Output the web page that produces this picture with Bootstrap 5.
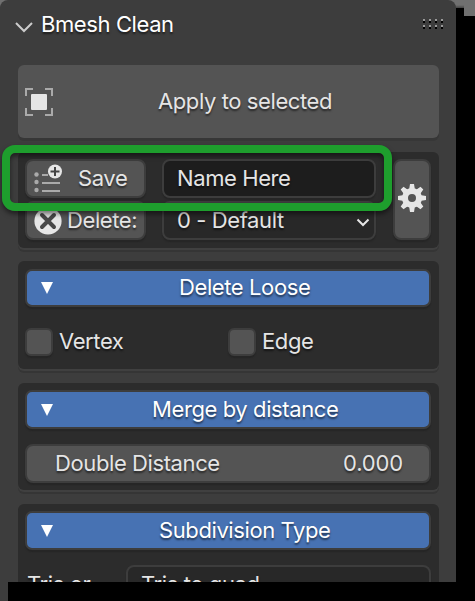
<!DOCTYPE html>
<html lang="en" data-bs-theme="dark">
<head>
<meta charset="utf-8">
<title>Bmesh Clean</title>
<meta name="viewport" content="width=device-width, initial-scale=1">
<link href="https://cdn.jsdelivr.net/npm/bootstrap@5.3.0/dist/css/bootstrap.min.css" rel="stylesheet">
<style>
body{background:#000;font-family:Inter,"Open Sans",sans-serif;font-size:22px;letter-spacing:-.4px;line-height:1;color:#e5e5e5;width:475px;height:601px}
.backdrop{left:0;top:0;width:475px;height:8px;background:linear-gradient(#707070 5px,#444 8px)}
.backdrop-tab{right:0;top:0;width:11px;height:16px;background:#707070}
.panel{width:456px;height:582px;background:#3d3d3d;border-radius:8px 8px 0 0;padding:0 17px 0 18px}
.panel-foot{width:8px;height:19px;background:#3d3d3d}
.panel-head{height:65px;color:#fff;padding-top:13px;margin-left:-3px}
.panel-head,.ctl,.lbl{text-shadow:0 2px 2px rgba(0,0,0,.55);white-space:nowrap}
.ctl>span,.lbl>span,span.lbl{padding-bottom:2px}
.grip{margin:6px -6px 0 0}
.chevron{margin:8px 8px 0 0}
.apply{height:73px;background:#545454;border-radius:6px;box-shadow:0 3px 0 #373737;margin-bottom:14px}
.group{background:#2c2c2c;border-radius:6px;padding:7px 8px 0 7px;margin-bottom:13px;box-shadow:0 2px 0 #404040,0 4px 0 #353535}
.ctl{border:2px solid #3d3d3d;border-radius:8px;height:39px;background:#545454;box-shadow:0 2px 1px #262626}
.ctl.blue{background:#4772b3;color:#fff;border-radius:7px}
.ctl.field{background:#1d1d1d}
.ctl.menu{background:#282828}
.stack{gap:3px}
.left-col{width:121px}
.mid-col{width:214px;margin-left:16px}
.gear{width:38px;height:81px}
.box-check{width:28px;height:28px;border-radius:6px}
.icon{margin-left:7px;flex:none}
.marker{left:2px;top:145px;width:390px;height:66px;border:8px solid #1e9e2d;border-radius:13px;box-shadow:0 3px 5px rgba(0,0,0,.5),inset 0 3px 5px rgba(0,0,0,.5)}
.g1{height:96px}.g2{height:108px;padding-top:8px;margin-bottom:14px}.g3{height:107px;margin-bottom:14px}.g4{height:90px;margin-bottom:0}
.g2 .blue{height:38px}
.g2 .blue span{padding-bottom:3px}
.tri{margin-left:14px}
.num{letter-spacing:-.15px}
</style>
<script src="https://cdn.jsdelivr.net/npm/bootstrap@5.3.0/dist/js/bootstrap.bundle.min.js"></script>
</head>
<body class="position-relative overflow-hidden m-0">
<div class="backdrop position-absolute"></div>
<div class="backdrop-tab position-absolute"></div>
<main class="panel position-relative overflow-hidden">
  <header class="panel-head d-flex align-items-start">
    <svg class="chevron" width="18" height="12" viewBox="0 0 18 12"><path d="M1 2l8 8 8-8" fill="none" stroke="#ccc" stroke-width="2"/></svg>
    <span>Bmesh Clean</span>
    <svg class="grip ms-auto" width="22" height="11" viewBox="0 0 22 11" shape-rendering="crispEdges"><path fill="#999" d="M0 0h2v2H0zM6 0h2v2H6zM12 0h2v2h-2zM18 0h2v2h-2zM0 6h2v2H0zM6 6h2v2H6zM12 6h2v2h-2zM18 6h2v2h-2z"/><path d="M0 2h2v2H0zM6 2h2v2H6zM12 2h2v2h-2zM18 2h2v2h-2zM0 8h2v2H0zM6 8h2v2H6zM12 8h2v2h-2zM18 8h2v2h-2z" fill="#000"/></svg>
  </header>

  <div class="apply lbl d-flex align-items-center">
    <svg class="icon" width="28" height="28" viewBox="0 0 28 28"><path d="M1 8V1h7M20 1h7v7M27 20v7h-7M8 27H1v-7" fill="none" stroke="#aaa" stroke-width="2"/><rect x="6" y="6" width="16" height="16" rx="1" fill="#e6e6e6"/></svg>
    <span style="margin-left:105px">Apply to selected</span>
  </div>

  <section class="group g1 d-flex">
    <div class="left-col stack d-flex flex-column">
      <div class="ctl d-flex align-items-center">
        <svg class="icon" width="28" height="30" viewBox="0 0 28 30"><g fill="#aaa"><circle cx="2.500" cy="10.500" r="2.200"/><circle cx="2.500" cy="18" r="2.200"/><circle cx="2.500" cy="26" r="2.200"/><path d="M8 10h6v2H8zM8 18h18v2H8zM8 26h18v2H8z"/></g><circle cx="21" cy="7.500" r="7" fill="#e6e6e6"/><path d="M21 3v9M16.500 7.500h9" stroke="#444" stroke-width="2"/></svg>
        <span style="margin-left:16px">Save</span>
      </div>
      <div class="ctl d-flex align-items-center">
        <svg class="icon" width="28" height="28" viewBox="0 0 28 28"><circle cx="14" cy="14" r="13.600" fill="#e6e6e6"/><path d="M8 8l12 12M20 8L8 20" stroke="#484848" stroke-width="4" stroke-linecap="round"/></svg>
        <span style="margin-left:5px">Delete:</span>
      </div>
    </div>
    <div class="mid-col stack d-flex flex-column">
      <div class="ctl field d-flex align-items-center"><span style="margin-left:13px">Name Here</span></div>
      <div class="ctl menu d-flex align-items-center"><span style="margin-left:13px">0 - Default</span>
        <svg class="ms-auto me-1 mt-1" width="14" height="10" viewBox="0 0 14 10"><path d="M1.500 1.500L7 7l5.500-5.500" fill="none" stroke="#e6e6e6" stroke-width="2"/></svg>
      </div>
    </div>
    <div class="ctl gear ms-auto d-flex align-items-center justify-content-center">
      <svg class="flex-shrink-0 mb-1" width="28" height="28" viewBox="-14 -14 28 28"><g fill="#e6e6e6"><path d="M-2 -14h4l1 6h-6zM-2 14h4l1-6h-6zM-14 -2v4l6 1v-6zM14 -2v4l-6 1v-6z"/><path transform="rotate(45)" d="M-2 -14h4l1 6h-6zM-2 14h4l1-6h-6zM-14 -2v4l6 1v-6zM14 -2v4l-6 1v-6z"/></g><circle r="7" fill="none" stroke="#e6e6e6" stroke-width="6"/></svg>
    </div>
  </section>

  <section class="group g2">
    <div class="ctl blue d-flex align-items-center"><svg class="tri" width="12" height="12"><path d="M0 0h12L6 12z" fill="#fff"/></svg><span style="margin-left:126px">Delete Loose</span></div>
    <div class="d-flex align-items-center" style="margin-top:21px">
      <div class="ctl box-check"></div><span class="lbl" style="margin-left:6px;width:169px">Vertex</span>
      <div class="ctl box-check"></div><span class="lbl" style="margin-left:6px">Edge</span>
    </div>
  </section>

  <section class="group g3">
    <div class="ctl blue d-flex align-items-center"><svg class="tri" width="12" height="12"><path d="M0 0h12L6 12z" fill="#fff"/></svg><span style="margin-left:99px">Merge by distance</span></div>
    <div class="ctl d-flex align-items-center justify-content-between" style="margin-top:15px;padding:0 26px 0 28px"><span>Double Distance</span><span class="num">0.000</span></div>
  </section>

  <section class="group g4">
    <div class="ctl blue d-flex align-items-center"><svg class="tri" width="12" height="12"><path d="M0 0h12L6 12z" fill="#fff"/></svg><span style="margin-left:106px">Subdivision Type</span></div>
    <div class="d-flex align-items-center" style="margin-top:15px">
      <span class="lbl" style="width:99px;padding-left:2px">Tris or</span>
      <div class="ctl menu flex-grow-1 d-flex align-items-center" style="margin-left:2px"><span style="margin-left:13px">Tris to quad</span></div>
    </div>
  </section>
</main>
<div class="panel-foot"></div>
<div class="marker position-absolute"></div>
</body>
</html>
